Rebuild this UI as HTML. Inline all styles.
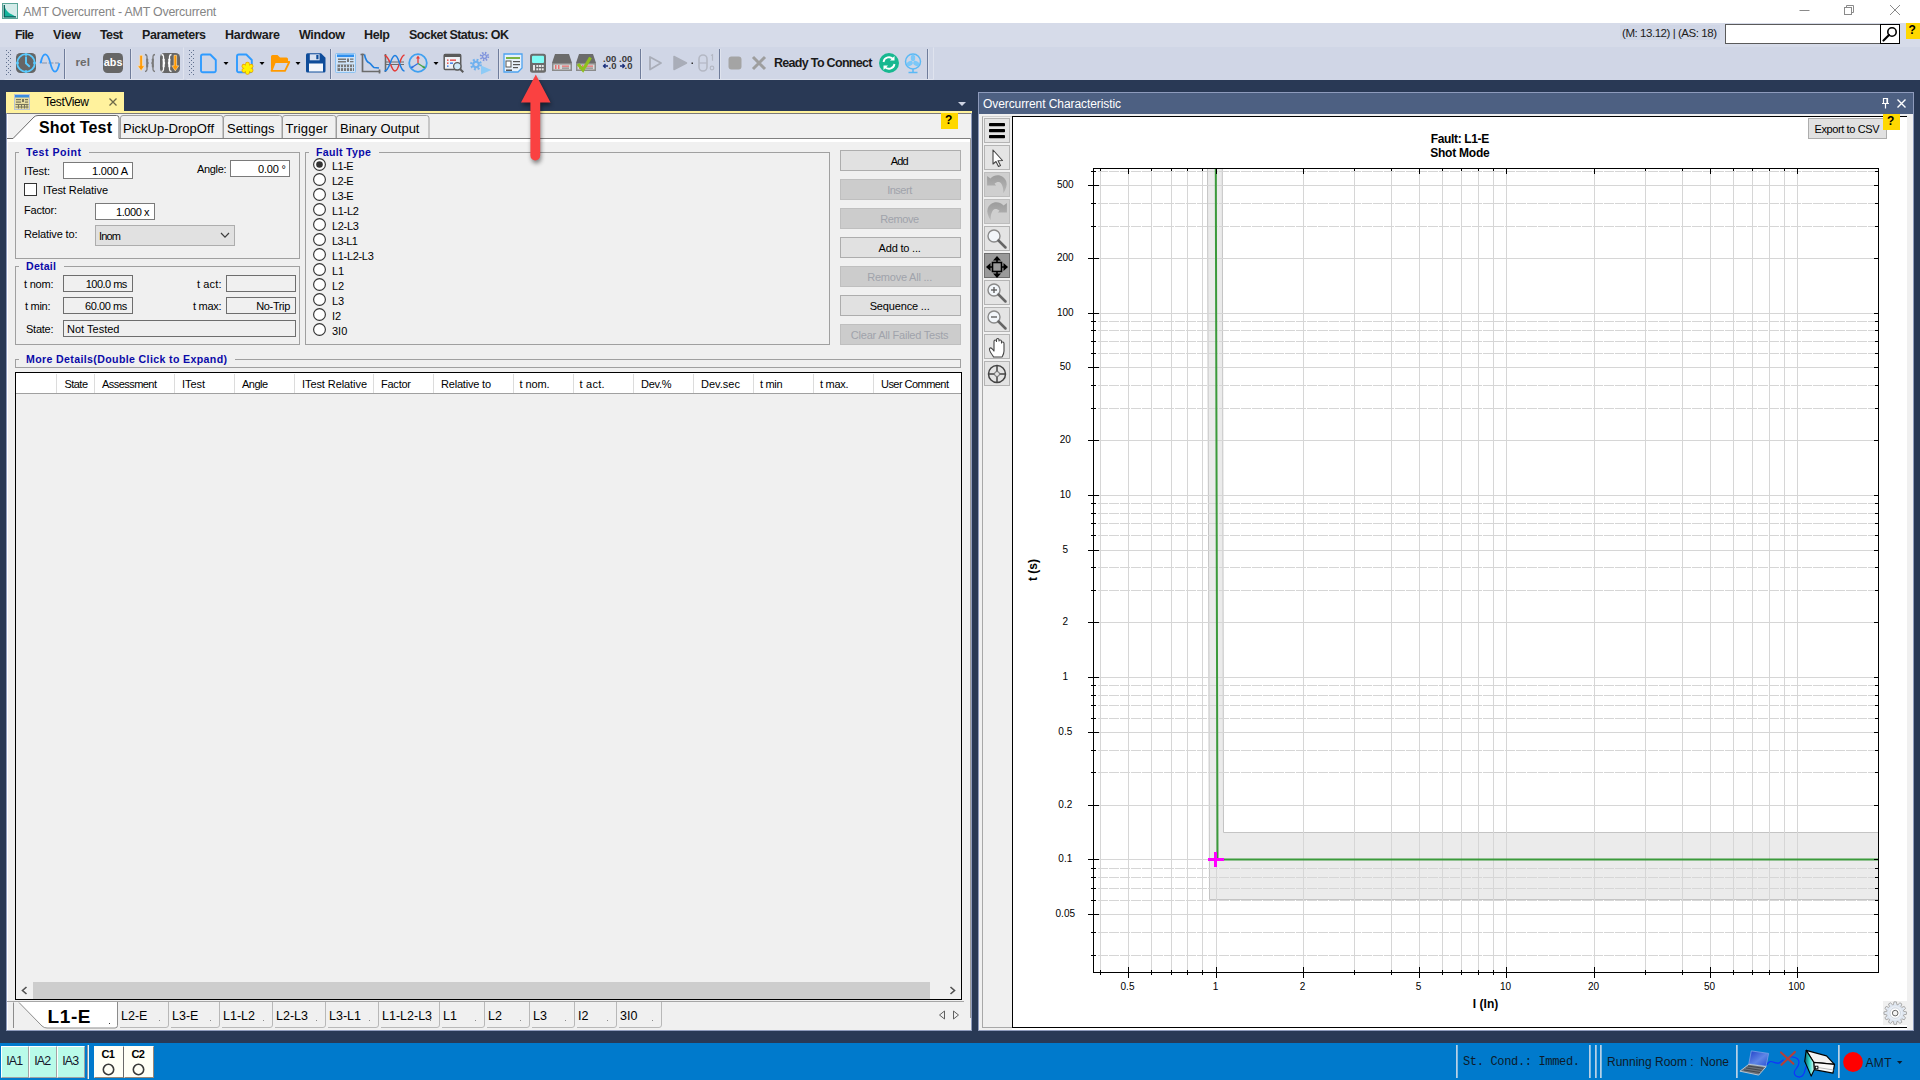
<!DOCTYPE html>
<html lang="en"><head><meta charset="utf-8"><title>AMT Overcurrent - AMT Overcurrent</title>
<style>
html,body{margin:0;padding:0;}
body{width:1920px;height:1080px;overflow:hidden;position:relative;background:#293955;font-family:"Liberation Sans", sans-serif;font-size:11px;color:#000;}
.t{position:absolute;white-space:pre;}
.b{position:absolute;box-sizing:border-box;}
svg{position:absolute;overflow:visible;}
</style></head>
<body>
<div class="b" style="left:0px;top:0px;width:1920px;height:23px;background:#fff;"></div>
<svg style="left:2px;top:3px" width="16" height="16" viewBox="0 0 16 16"><rect x=".5" y=".5" width="15" height="15" fill="#d3ebe9" stroke="#5aa698"/><path d="M2 2 C3.500 7 6 9.500 9 11 C11 12 12.500 13 14.300 14.200 L2 14.200 Z" fill="#15b49c"/><path d="M2.300 2 V13.800 H14" fill="none" stroke="#0a5f5a" stroke-width="1.300"/></svg>
<span class="t" id="t1" style="top:5.50px;font-size:12.4px;line-height:12.4px;color:#858585;letter-spacing:-0.216px;left:23.3px;">AMT Overcurrent - AMT Overcurrent</span>
<svg style="left:1790px;top:0" width="130" height="23" viewBox="0 0 130 23"><g fill="none" stroke="#8a8a8a" stroke-width="1"><path d="M9.5 10.5 H19.5"/><rect x="54.5" y="7.5" width="7" height="7"/><path d="M56.5 7.5 V5.5 H63.5 V12.5 H61.5"/><path d="M100 5 L110 15 M110 5 L100 15"/></g></svg>
<div class="b" style="left:0px;top:23px;width:1920px;height:24px;background:#d6dbe9;"></div>
<div class="b" style="left:0px;top:47px;width:1920px;height:33px;background:#d0d6e6;"></div>
<span class="t" id="t2" style="top:29.42px;font-size:12.5px;line-height:12.5px;font-weight:bold;color:#1b1b1b;letter-spacing:-0.848px;left:15px;">File</span>
<span class="t" id="t3" style="top:29.42px;font-size:12.5px;line-height:12.5px;font-weight:bold;color:#1b1b1b;letter-spacing:-0.090px;left:53px;">View</span>
<span class="t" id="t4" style="top:29.42px;font-size:12.5px;line-height:12.5px;font-weight:bold;color:#1b1b1b;letter-spacing:-0.594px;left:100px;">Test</span>
<span class="t" id="t5" style="top:29.42px;font-size:12.5px;line-height:12.5px;font-weight:bold;color:#1b1b1b;letter-spacing:-0.457px;left:142px;">Parameters</span>
<span class="t" id="t6" style="top:29.42px;font-size:12.5px;line-height:12.5px;font-weight:bold;color:#1b1b1b;letter-spacing:-0.283px;left:225px;">Hardware</span>
<span class="t" id="t7" style="top:29.42px;font-size:12.5px;line-height:12.5px;font-weight:bold;color:#1b1b1b;letter-spacing:-0.359px;left:299px;">Window</span>
<span class="t" id="t8" style="top:29.42px;font-size:12.5px;line-height:12.5px;font-weight:bold;color:#1b1b1b;letter-spacing:-0.364px;left:364px;">Help</span>
<span class="t" id="t9" style="top:29.42px;font-size:12.5px;line-height:12.5px;font-weight:bold;color:#1b1b1b;letter-spacing:-0.566px;left:409px;">Socket Status: OK</span>
<div class="b" style="left:1620px;top:25px;width:100px;height:15px;background:#d0d6e6;z-index:-0;"></div>
<span class="t" id="t10" style="top:28.07px;font-size:11.5px;line-height:11.5px;color:#1b1b1b;letter-spacing:-0.449px;left:1622px;">(M: 13.12) | (AS: 18)</span>
<div class="b" style="left:1725px;top:24px;width:175px;height:20px;background:#fff;border:1px solid #5a5a5a;"></div>
<div class="b" style="left:1880px;top:24px;width:20px;height:20px;background:#fff;border:1px solid #000;"></div>
<svg style="left:1881px;top:25px" width="18" height="18" viewBox="0 0 18 18"><circle cx="11" cy="7" r="4.2" fill="none" stroke="#000" stroke-width="1.6"/><path d="M8 10 L2.5 15.5" stroke="#000" stroke-width="2.2" stroke-linecap="round"/></svg>
<div class="b" style="left:1906px;top:23px;width:14px;height:16px;background:#ffd800;"></div><span class="t" id="t11" style="top:23.64px;font-size:12px;line-height:12px;font-weight:bold;left:1912.2px;transform:translateX(-50%);">?</span>
<svg style="left:0;top:0" width="1920" height="80" viewBox="0 0 1920 80"><path d="M4.500 79.500 H183.500 V47.500 M186.500 79.500 H933.500 V47.500" fill="none" stroke="#dfe3ee" stroke-width="1"/><rect x="6" y="50" width="1" height="1" fill="#62718f"/><rect x="10" y="50" width="1" height="1" fill="#62718f"/><rect x="8" y="52" width="1" height="1" fill="#62718f"/><rect x="6" y="54" width="1" height="1" fill="#62718f"/><rect x="10" y="54" width="1" height="1" fill="#62718f"/><rect x="8" y="56" width="1" height="1" fill="#62718f"/><rect x="6" y="58" width="1" height="1" fill="#62718f"/><rect x="10" y="58" width="1" height="1" fill="#62718f"/><rect x="8" y="60" width="1" height="1" fill="#62718f"/><rect x="6" y="62" width="1" height="1" fill="#62718f"/><rect x="10" y="62" width="1" height="1" fill="#62718f"/><rect x="8" y="64" width="1" height="1" fill="#62718f"/><rect x="6" y="66" width="1" height="1" fill="#62718f"/><rect x="10" y="66" width="1" height="1" fill="#62718f"/><rect x="8" y="68" width="1" height="1" fill="#62718f"/><rect x="6" y="70" width="1" height="1" fill="#62718f"/><rect x="10" y="70" width="1" height="1" fill="#62718f"/><rect x="8" y="72" width="1" height="1" fill="#62718f"/><rect x="6" y="74" width="1" height="1" fill="#62718f"/><rect x="10" y="74" width="1" height="1" fill="#62718f"/><rect x="189" y="50" width="1" height="1" fill="#62718f"/><rect x="193" y="50" width="1" height="1" fill="#62718f"/><rect x="191" y="52" width="1" height="1" fill="#62718f"/><rect x="189" y="54" width="1" height="1" fill="#62718f"/><rect x="193" y="54" width="1" height="1" fill="#62718f"/><rect x="191" y="56" width="1" height="1" fill="#62718f"/><rect x="189" y="58" width="1" height="1" fill="#62718f"/><rect x="193" y="58" width="1" height="1" fill="#62718f"/><rect x="191" y="60" width="1" height="1" fill="#62718f"/><rect x="189" y="62" width="1" height="1" fill="#62718f"/><rect x="193" y="62" width="1" height="1" fill="#62718f"/><rect x="191" y="64" width="1" height="1" fill="#62718f"/><rect x="189" y="66" width="1" height="1" fill="#62718f"/><rect x="193" y="66" width="1" height="1" fill="#62718f"/><rect x="191" y="68" width="1" height="1" fill="#62718f"/><rect x="189" y="70" width="1" height="1" fill="#62718f"/><rect x="193" y="70" width="1" height="1" fill="#62718f"/><rect x="191" y="72" width="1" height="1" fill="#62718f"/><rect x="189" y="74" width="1" height="1" fill="#62718f"/><rect x="193" y="74" width="1" height="1" fill="#62718f"/><rect x="64" y="49" width="1" height="30" fill="#6f7c9a"/><rect x="65" y="49" width="1" height="30" fill="#dfe3ee"/><rect x="130" y="49" width="1" height="30" fill="#6f7c9a"/><rect x="131" y="49" width="1" height="30" fill="#dfe3ee"/><rect x="330" y="49" width="1" height="30" fill="#6f7c9a"/><rect x="331" y="49" width="1" height="30" fill="#dfe3ee"/><rect x="498" y="49" width="1" height="30" fill="#6f7c9a"/><rect x="499" y="49" width="1" height="30" fill="#dfe3ee"/><rect x="640" y="49" width="1" height="30" fill="#6f7c9a"/><rect x="641" y="49" width="1" height="30" fill="#dfe3ee"/><rect x="719" y="49" width="1" height="30" fill="#6f7c9a"/><rect x="720" y="49" width="1" height="30" fill="#dfe3ee"/><rect x="927" y="49" width="1" height="30" fill="#6f7c9a"/><rect x="928" y="49" width="1" height="30" fill="#dfe3ee"/><rect x="16" y="53" width="20" height="20" rx="4.500" fill="#666"/><circle cx="26" cy="63" r="8.800" fill="none" stroke="#5bcbff" stroke-width="1.800"/><path d="M26 56.500 V63.300 L29.800 66.800" fill="none" stroke="#5bcbff" stroke-width="1.900"/><path d="M26 53 v3 M26 70 v3 M16 63 h3 M33 63 h3" stroke="#5bcbff" stroke-width="1.400"/><path d="M42 63 H59" stroke="#8a93a8" stroke-width="1" stroke-dasharray="5 1.500"/><path d="M40.800 62.500 C43 51.500 47.500 51.500 50.300 63 S57 74.500 59.400 63.300" fill="none" stroke="#2f9bff" stroke-width="1.800"/><circle cx="40.800" cy="62.500" r="1.100" fill="#2f9bff"/><text x="75.500" y="65.500" font-family='"Liberation Sans", sans-serif' font-size="11" font-weight="bold" fill="#6b6b6b" textLength="14.500" lengthAdjust="spacingAndGlyphs">rel</text><rect x="103" y="53" width="20" height="20" rx="4.500" fill="#666"/><text x="103.800" y="65.500" font-family='"Liberation Sans", sans-serif' font-size="11" font-weight="bold" fill="#fff" textLength="18.600" lengthAdjust="spacingAndGlyphs">abs</text><path d="M139.8 55.300 h2.600 v10.500 h2.200 l-3.500 5 l-3.500 -5 h2.200 z" fill="#ff9800" stroke="#ffe9c4" stroke-width=".6"/><path d="M145 54.500 q2 .3 2 2 v4.500 q0 1.800 1.500 2 q-1.500 .2 -1.500 2 v4.500 q0 1.700 -2 2" fill="none" stroke="#7a7a7a" stroke-width="1.300"/><rect x="146.2" y="58.500" width="2" height="9" rx=".8" fill="#7a7a7a"/><path d="M155 54.500 q-2 .3 -2 2 v4.500 q0 1.800 -1.500 2 q1.500 .2 1.500 2 v4.500 q0 1.700 2 2" fill="none" stroke="#7a7a7a" stroke-width="1.300"/><rect x="151.8" y="58.500" width="2" height="9" rx=".8" fill="#7a7a7a"/><rect x="160" y="53" width="20" height="20" rx="4.500" fill="#666"/><path d="M161.5 54.500 q2 .3 2 2 v4.500 q0 1.800 1.500 2 q-1.500 .2 -1.500 2 v4.500 q0 1.700 -2 2" fill="none" stroke="#fff" stroke-width="1.300"/><rect x="162.7" y="58.500" width="2" height="9" rx=".8" fill="#fff"/><path d="M171.5 54.500 q-2 .3 -2 2 v4.500 q0 1.800 -1.500 2 q1.500 .2 1.500 2 v4.500 q0 1.700 2 2" fill="none" stroke="#fff" stroke-width="1.300"/><rect x="168.3" y="58.500" width="2" height="9" rx=".8" fill="#fff"/><path d="M174 55.300 h2.600 v10.500 h2.200 l-3.500 5 l-3.500 -5 h2.200 z" fill="#ff9800" stroke="#ffe9c4" stroke-width=".6"/><path d="M202.8 54.500 h7.500 l5.500 5.500 v10.500 a1.800 1.800 0 0 1 -1.800 1.800 h-11.200 a1.800 1.800 0 0 1 -1.800 -1.800 v-14.200 a1.800 1.800 0 0 1 1.800 -1.800 z" fill="none" stroke="#2f9bff" stroke-width="1.900" stroke-linejoin="round"/><path d="M223.5 62 h5 l-2.5 3 z" fill="#000"/><path d="M238.8 54.500 h7.500 l5.500 5.500 v10.500 a1.800 1.800 0 0 1 -1.800 1.800 h-11.200 a1.800 1.800 0 0 1 -1.800 -1.800 v-14.200 a1.800 1.800 0 0 1 1.800 -1.800 z" fill="none" stroke="#2f9bff" stroke-width="1.900" stroke-linejoin="round"/><g transform="translate(247.500 68.300)" stroke="#f0a800" stroke-width="4.600" stroke-linecap="round"><path d="M0 -4.200 V4.200"/><path d="M0 -4.200 V4.200" transform="rotate(60)"/><path d="M0 -4.200 V4.200" transform="rotate(120)"/></g><g transform="translate(247.500 68.300)" stroke="#fff200" stroke-width="3" stroke-linecap="round"><path d="M0 -4.200 V4.200"/><path d="M0 -4.200 V4.200" transform="rotate(60)"/><path d="M0 -4.200 V4.200" transform="rotate(120)"/></g><path d="M259.5 62 h5 l-2.5 3 z" fill="#000"/><path d="M271 56.500 a1.500 1.500 0 0 1 1.500 -1.500 h5 l2.500 2.500 h6.500 a1.500 1.500 0 0 1 1.500 1.500 v3 h-12.500 l-4.500 8 z" fill="#ff9a00"/><path d="M275 62 h14.300 l-4.300 8.800 h-13.500 z" fill="#d0d6e6" stroke="#ff9a00" stroke-width="1.800" stroke-linejoin="round"/><path d="M295.5 62 h5 l-2.5 3 z" fill="#000"/><path d="M307.500 53.300 h13.500 l4.500 4.500 v13.200 a1.500 1.500 0 0 1 -1.500 1.500 h-16.500 a1.500 1.500 0 0 1 -1.500 -1.500 v-16.200 a1.500 1.500 0 0 1 1.500 -1.500 z" fill="#0e4c9a"/><rect x="309.800" y="54.300" width="9.800" height="6" fill="#d9e2f2"/><rect x="316.300" y="55" width="2.200" height="4.200" fill="#0e4c9a"/><rect x="309" y="63.500" width="14" height="8" fill="#f4f7fc"/><rect x="335.500" y="53.500" width="20" height="19" rx="1" fill="#cfe4f9" stroke="#8cc2f2"/><rect x="337" y="54.500" width="17" height="2.500" fill="#2f8fee"/><g fill="#777"><rect x="338" y="58.500" width="8" height="1.500"/><rect x="347" y="58.500" width="2" height="3.500"/><rect x="350" y="58.500" width="3.500" height="1.300"/><rect x="338" y="61" width="8" height="1.500"/><rect x="350" y="61" width="3.500" height="1.300"/><rect x="337.500" y="64.500" width="16.500" height="6.500"/></g><g fill="#cfe4f9"><rect x="337.500" y="67.200" width="16.500" height=".900"/><rect x="340" y="64.500" width=".900" height="6.500"/><rect x="343" y="64.500" width=".900" height="6.500"/><rect x="346" y="64.500" width=".900" height="6.500"/><rect x="349" y="64.500" width=".900" height="6.500"/><rect x="352" y="64.500" width=".900" height="6.500"/></g><path d="M362.500 53.500 V71.500 H380.500 M360.500 54.500 h4 M379.500 69.500 v4" fill="none" stroke="#6b6b6b" stroke-width="1.700"/><path d="M364.500 54.500 C365.500 60 367 62 369.500 63 C371.500 64 372 66.500 374 67.500 L379 68" fill="none" stroke="#1f7fe0" stroke-width="1.600"/><path d="M385.500 54 V72" stroke="#6b6b6b" stroke-width="1.600"/><path d="M385 62 H404 M385 64.500 H404" stroke="#6b6b6b" stroke-width="1.100"/><path d="M384.500 55.500 C390 55.500 390.500 71 395 71 S 399.500 55.500 404.500 55" fill="none" stroke="#e53935" stroke-width="1.500"/><path d="M384.500 71 C390 71 390.500 55.500 395 55.500 S 399.500 71 404.500 71" fill="none" stroke="#1f7fe0" stroke-width="1.500"/><circle cx="418" cy="63" r="8.800" fill="none" stroke="#3fa0f0" stroke-width="1.800"/><path d="M418 63.500 V57.500" stroke="#e53935" stroke-width="1.300"/><path d="M416 58.500 L418 55.500 L420 58.500 Z" fill="#e53935"/><path d="M418 63.500 L412.500 67" stroke="#2f6fe0" stroke-width="1.300"/><path d="M410.300 68.300 l3.300 -.3 -1.500 -2.400 z" fill="#2f6fe0"/><path d="M418 63.500 L423.500 67" stroke="#43a047" stroke-width="1.300"/><path d="M425.700 68.300 l-3.300 -.3 1.500 -2.400 z" fill="#43a047"/><path d="M433.5 62 h5 l-2.5 3 z" fill="#000"/><rect x="444.200" y="54.500" width="16.500" height="15" rx="1" fill="#eef1f6" stroke="#5a5a5a" stroke-width="1.500"/><rect x="444" y="54" width="17" height="3" fill="#5a5a5a"/><g fill="#e53935"><rect x="447" y="59.500" width="1.500" height="1.300"/><rect x="450" y="59.500" width="6" height="1.300"/><rect x="447" y="62.500" width="1.500" height="1.300"/></g><g fill="#2f6fe0"><rect x="450" y="62.500" width="3" height="1.300"/><rect x="447" y="65.500" width="1.500" height="1.300"/></g><circle cx="457.300" cy="66.300" r="3.700" fill="#cfe8f8" stroke="#5a5a5a" stroke-width="1.300"/><path d="M460 69 L463.300 72.300" stroke="#5a5a5a" stroke-width="2"/><circle cx="476" cy="64.5" r="4.7" fill="none" stroke="#6fb0ee" stroke-width="2.400" stroke-dasharray="1.846 1.846"/><circle cx="476" cy="64.5" r="3.8" fill="#6fb0ee"/><circle cx="476" cy="64.5" r="1.7" fill="#d0d6e6"/><circle cx="484.5" cy="56.5" r="3.5" fill="none" stroke="#7f93dc" stroke-width="2.400" stroke-dasharray="1.374 1.374"/><circle cx="484.5" cy="56.5" r="2.6" fill="#7f93dc"/><circle cx="484.5" cy="56.5" r="1.2" fill="#d0d6e6"/><path d="M481 65.500 L491.500 70 L481 74.500 Z" fill="#8ecbf6"/><path d="M504 54 h18 v14 l-4 4 h-14 z" fill="#e8f1fb" stroke="#4da3f0" stroke-width="1.300"/><rect x="506" y="57" width="14" height="2" fill="#7cb342"/><rect x="506" y="61" width="5" height="6" fill="#fff" stroke="#555" stroke-width="1"/><g fill="#555"><rect x="513" y="61" width="7" height="1.200"/><rect x="513" y="64" width="7" height="1.200"/><rect x="513" y="67" width="5" height="1.200"/><rect x="506" y="69.500" width="6" height="1.500"/></g><rect x="530" y="53.700" width="16" height="19" rx="2.500" fill="#6b6b6b"/><rect x="532" y="55.700" width="12" height="7.300" rx="1" fill="#7ffcf5"/><g fill="#e6e6e6"><rect x="533" y="65" width="2" height="5.500"/><rect x="536.300" y="65" width="2" height="2"/><rect x="539" y="65" width="2" height="2"/><rect x="541.700" y="65" width="2" height="2"/><rect x="536.300" y="68.300" width="2" height="2"/><rect x="539" y="68.300" width="2" height="2"/><rect x="541.700" y="68.300" width="2" height="2"/></g><path d="M555 54 h14 l3 9 h-20 z" fill="#6b6b6b"/><rect x="552" y="63" width="20" height="8" fill="#8a8a8a"/><rect x="553.5" y="64.500" width="17" height="5" fill="#d9d9d9"/><g fill="#e57373"><rect x="555" y="65" width="1.500" height="4"/><rect x="558" y="65" width="1.500" height="4"/><rect x="562" y="65.500" width="7" height="1.300"/></g><rect x="562" y="67.600" width="7" height="1" fill="#777"/><path d="M579 54 h14 l3 9 h-20 z" fill="#6b6b6b"/><rect x="576" y="63" width="20" height="8" fill="#8a8a8a"/><rect x="577.5" y="64.500" width="17" height="5" fill="#d9d9d9"/><g fill="#e57373"><rect x="579" y="65" width="1.500" height="4"/><rect x="582" y="65" width="1.500" height="4"/><rect x="586" y="65.500" width="7" height="1.300"/></g><rect x="586" y="67.600" width="7" height="1" fill="#777"/><path d="M578 64 L583 70 L590.500 57.500" fill="none" stroke="#8fbf1f" stroke-width="3.200"/><text x="603" y="61.500" font-family='"Liberation Sans", sans-serif' font-size="9.500" font-weight="bold" fill="#3a3a3a">.00</text><text x="608.500" y="69" font-family='"Liberation Sans", sans-serif' font-size="9.500" font-weight="bold" fill="#3a3a3a">.0</text><text x="619" y="61.500" font-family='"Liberation Sans", sans-serif' font-size="9.500" font-weight="bold" fill="#3a3a3a">.00</text><text x="624.500" y="69" font-family='"Liberation Sans", sans-serif' font-size="9.500" font-weight="bold" fill="#3a3a3a">.0</text><path d="M608 66 h-4.500 m2 -2 l-2 2 2 2" fill="none" stroke="#1a2e7a" stroke-width="1.300"/><path d="M620 66 h4.500 m-2 -2 l2 2 -2 2" fill="none" stroke="#1a2e7a" stroke-width="1.300"/><path d="M650 57 L661 63 L650 69.500 Z" fill="none" stroke="#a9adb8" stroke-width="1.800" stroke-linejoin="round"/><path d="M674 56.500 L686.500 63 L674 69.500 Z" fill="#a9adb8" stroke="#a9adb8" stroke-width="1.500" stroke-linejoin="round"/><rect x="691.500" y="62.500" width="1.500" height="1.500" fill="#333"/><rect x="699" y="55" width="8" height="16" rx="4" fill="none" stroke="#b4b8c4" stroke-width="1.600"/><path d="M699 63 h8" stroke="#b4b8c4" stroke-width="1.200"/><path d="M711 55.500 l1.500 -.8 v6" fill="none" stroke="#b4b8c4" stroke-width="1.200"/><circle cx="712" cy="68" r="1.800" fill="none" stroke="#b4b8c4" stroke-width="1.200"/><rect x="728.500" y="56.500" width="13" height="13" rx="3" fill="#a4a4a4"/><path d="M753 57 L765 69 M765 57 L753 69" stroke="#9e9e9e" stroke-width="3"/><circle cx="889" cy="63" r="10" fill="#17b890"/><path d="M883.500 62 a5.600 5.600 0 0 1 10 -2.500 M894.500 64 a5.600 5.600 0 0 1 -10 2.500" fill="none" stroke="#fff" stroke-width="1.800"/><path d="M894.500 56 v4.500 h-4.500 z M883.500 70 v-4.500 h4.500 z" fill="#fff"/><circle cx="913" cy="61.500" r="7.500" fill="none" stroke="#5bb9f5" stroke-width="1.500"/><g fill="#7cc8f8"><ellipse cx="913" cy="58" rx="2.200" ry="3.200"/><ellipse cx="909.800" cy="63.500" rx="3.200" ry="2.200" transform="rotate(-30 909.800 63.500)"/><ellipse cx="916.200" cy="63.500" rx="3.200" ry="2.200" transform="rotate(30 916.200 63.500)"/></g><path d="M913 69 v3 M908.500 72.500 h9" stroke="#5bb9f5" stroke-width="1.600"/></svg>
<span class="t" id="t12" style="top:57.42px;font-size:12.5px;line-height:12.5px;font-weight:bold;color:#1b1b1b;letter-spacing:-0.688px;left:774px;">Ready To Connect</span>
<div class="b" style="left:6px;top:92px;width:118px;height:19px;background:#fff29d;"></div>
<svg style="left:14px;top:94px" width="16" height="16" viewBox="0 0 16 16"><rect x=".5" y=".5" width="15" height="15" fill="#e6dca0" stroke="#b9c4d6"/><rect x="1" y="1" width="14" height="2.500" fill="#3b8de0"/><g fill="#77745a"><rect x="2" y="5" width="5" height="1.200"/><rect x="8" y="5" width="2" height="3"/><rect x="11" y="5" width="3" height="1.200"/><rect x="2" y="7.500" width="5" height="1.200"/><rect x="11" y="7.500" width="3" height="1.200"/><rect x="1.500" y="10" width="13" height="1"/><rect x="1.500" y="12.500" width="13" height="1"/><rect x="4" y="10" width="1" height="4.500"/><rect x="7" y="10" width="1" height="4.500"/><rect x="10" y="10" width="1" height="4.500"/><rect x="12.500" y="10" width="1" height="4.500"/></g></svg>
<span class="t" id="t13" style="top:95.84px;font-size:12px;line-height:12px;letter-spacing:-0.401px;left:44px;">TestView</span>
<svg style="left:108px;top:97px" width="10" height="10" viewBox="0 0 10 10"><path d="M1.500 1.500 L8.500 8.500 M8.500 1.500 L1.500 8.500" stroke="#6d6948" stroke-width="1.300"/></svg>
<svg style="left:957px;top:101px" width="10" height="6" viewBox="0 0 10 6"><path d="M1 1 h8 l-4 4 z" fill="#ced4e3"/></svg>
<div class="b" style="left:6px;top:111px;width:966px;height:2px;background:#fff29d;"></div>
<div class="b" style="left:6px;top:113px;width:966px;height:918px;background:#f0f0f0;border:1px solid #8e9bbc;border-top:none;"></div>
<div class="b" style="left:7px;top:113px;width:964px;height:1px;background:#7a7a7a;"></div>
<div class="b" style="left:7px;top:114px;width:1px;height:916px;background:#fff;"></div>
<div class="b" style="left:941px;top:113px;width:17px;height:16px;background:#ffd800;"></div><span class="t" id="t14" style="top:113.64px;font-size:12px;line-height:12px;font-weight:bold;left:948.7px;transform:translateX(-50%);">?</span>
<div class="b" style="left:7px;top:138px;width:964px;height:1px;background:#7f7f7f;"></div>
<div class="b" style="left:7px;top:139px;width:964px;height:3px;background:#fff;"></div>
<div class="b" style="left:970px;top:138px;width:1px;height:880px;background:#9a9a9a;"></div>
<svg style="left:0;top:0" width="480" height="145" viewBox="0 0 480 145"><g fill="#f0f0f0" stroke="#9e9e9e" stroke-width="1"><path d="M120.500 138 V118 q0 -2.500 2.500 -2.500 H220.500 q2.500 0 2.500 2.500 V138"/><path d="M223.500 138 V118 q0 -2.500 2.500 -2.500 H279.500 q2.500 0 2.500 2.500 V138"/><path d="M282.500 138 V118 q0 -2.500 2.500 -2.500 H333.500 q2.500 0 2.500 2.500 V138"/><path d="M336.500 138 V118 q0 -2.500 2.500 -2.500 H426.500 q2.500 0 2.500 2.500 V138"/></g><path d="M7 138.500 H13 L34 117 q1.500 -1.500 4 -1.500 H116.500 q2.500 0 2.500 2.500 V142 H7 Z" fill="#fff"/><path d="M7 138.500 H13 L34 117 q1.500 -1.500 4 -1.500 H116.500 q2.500 0 2.500 2.500 V138.500" fill="none" stroke="#6c6c6c" stroke-width="1"/></svg>
<span class="t" id="t15" style="top:120.46px;font-size:16px;line-height:16px;font-weight:bold;letter-spacing:0.161px;left:39px;">Shot Test</span>
<span class="t" id="t16" style="top:122.00px;font-size:13px;line-height:13px;letter-spacing:0.016px;left:123px;">PickUp-DropOff</span>
<span class="t" id="t17" style="top:122.00px;font-size:13px;line-height:13px;letter-spacing:0.075px;left:227px;">Settings</span>
<span class="t" id="t18" style="top:122.00px;font-size:13px;line-height:13px;letter-spacing:0.216px;left:285.5px;">Trigger</span>
<span class="t" id="t19" style="top:122.00px;font-size:13px;line-height:13px;left:340px;">Binary Output</span>
<div class="b" style="left:15px;top:152px;width:285px;height:107px;border:1px solid #a0a0a0;"></div><div class="b" style="left:16px;top:153px;width:283px;height:105px;border:1px solid #fff;border-right:none;border-bottom:none;opacity:.0;"></div><div class="b" style="left:19px;top:151px;width:70px;height:3px;background:#f0f0f0;"></div><span class="t" id="t20" style="top:147.43px;font-size:10.6px;line-height:10.6px;font-weight:bold;color:#0a0aa8;letter-spacing:0.508px;left:26px;">Test Point</span>
<span class="t" id="t21" style="top:165.69px;font-size:11px;line-height:11px;letter-spacing:-0.059px;left:24px;">ITest:</span>
<div class="b" style="left:63px;top:162px;width:70px;height:17px;background:#fff;border:1px solid #7a7a7a;"></div><span class="t" id="t22" style="top:166.19px;font-size:11px;line-height:11px;letter-spacing:-0.221px;right:1792.22px;">1.000 A</span>
<span class="t" id="t23" style="top:163.69px;font-size:11px;line-height:11px;letter-spacing:-0.338px;left:197px;">Angle:</span>
<div class="b" style="left:230px;top:160px;width:60px;height:17px;background:#fff;border:1px solid #7a7a7a;"></div><span class="t" id="t24" style="top:164.19px;font-size:11px;line-height:11px;letter-spacing:-0.174px;right:1634.17px;">0.00 °</span>
<div class="b" style="left:24px;top:183px;width:13px;height:13px;background:#fff;border:1px solid #333;"></div>
<span class="t" id="t25" style="top:184.99px;font-size:11px;line-height:11px;letter-spacing:-0.079px;left:43px;">ITest Relative</span>
<span class="t" id="t26" style="top:204.69px;font-size:11px;line-height:11px;letter-spacing:-0.206px;left:24px;">Factor:</span>
<div class="b" style="left:95px;top:203px;width:60px;height:17px;background:#fff;border:1px solid #7a7a7a;"></div><span class="t" id="t27" style="top:207.19px;font-size:11px;line-height:11px;letter-spacing:-0.431px;right:1770.93px;">1.000 x</span>
<span class="t" id="t28" style="top:228.99px;font-size:11px;line-height:11px;letter-spacing:-0.139px;left:24px;">Relative to:</span>
<div class="b" style="left:95px;top:225px;width:140px;height:21px;background:#e1e1e1;border:1px solid #adadad;"></div>
<span class="t" id="t29" style="top:230.99px;font-size:11px;line-height:11px;letter-spacing:-0.821px;left:99px;">Inom</span>
<svg style="left:220px;top:232px" width="10" height="7" viewBox="0 0 10 7"><path d="M1 1 L5 5.200 L9 1" fill="none" stroke="#3c3c3c" stroke-width="1.200"/></svg>
<div class="b" style="left:15px;top:266px;width:285px;height:79px;border:1px solid #a0a0a0;"></div><div class="b" style="left:16px;top:267px;width:283px;height:77px;border:1px solid #fff;border-right:none;border-bottom:none;opacity:.0;"></div><div class="b" style="left:19px;top:265px;width:45px;height:3px;background:#f0f0f0;"></div><span class="t" id="t30" style="top:261.43px;font-size:10.6px;line-height:10.6px;font-weight:bold;color:#0a0aa8;letter-spacing:0.228px;left:26px;">Detail</span>
<span class="t" id="t31" style="top:278.99px;font-size:11px;line-height:11px;letter-spacing:-0.216px;left:24px;">t nom:</span>
<div class="b" style="left:63px;top:275px;width:70px;height:17px;background:#f0f0f0;border:1px solid #6e6e6e;"></div><span class="t" id="t32" style="top:279.19px;font-size:11px;line-height:11px;letter-spacing:-0.521px;right:1793.22px;">100.0 ms</span>
<span class="t" id="t33" style="top:278.99px;font-size:11px;line-height:11px;letter-spacing:0.131px;left:197px;">t act:</span>
<div class="b" style="left:226px;top:275px;width:70px;height:17px;background:#f0f0f0;border:1px solid #6e6e6e;"></div>
<span class="t" id="t34" style="top:300.99px;font-size:11px;line-height:11px;letter-spacing:-0.281px;left:25px;">t min:</span>
<div class="b" style="left:63px;top:297px;width:70px;height:17px;background:#f0f0f0;border:1px solid #6e6e6e;"></div><span class="t" id="t35" style="top:301.19px;font-size:11px;line-height:11px;letter-spacing:-0.436px;right:1793.14px;">60.00 ms</span>
<span class="t" id="t36" style="top:300.99px;font-size:11px;line-height:11px;letter-spacing:-0.293px;left:193px;">t max:</span>
<div class="b" style="left:226px;top:297px;width:70px;height:17px;background:#f0f0f0;border:1px solid #6e6e6e;"></div><span class="t" id="t37" style="top:301.19px;font-size:11px;line-height:11px;letter-spacing:-0.377px;right:1630.08px;">No-Trip</span>
<span class="t" id="t38" style="top:323.99px;font-size:11px;line-height:11px;letter-spacing:-0.249px;left:26px;">State:</span>
<div class="b" style="left:63px;top:320px;width:233px;height:17px;background:#f0f0f0;border:1px solid #6e6e6e;"></div><span class="t" id="t39" style="top:324.09px;font-size:11px;line-height:11px;letter-spacing:0.012px;left:67px;">Not Tested</span>
<div class="b" style="left:305px;top:152px;width:525px;height:193px;border:1px solid #a0a0a0;"></div><div class="b" style="left:306px;top:153px;width:523px;height:191px;border:1px solid #fff;border-right:none;border-bottom:none;opacity:.0;"></div><div class="b" style="left:309px;top:151px;width:70px;height:3px;background:#f0f0f0;"></div><span class="t" id="t40" style="top:147.43px;font-size:10.6px;line-height:10.6px;font-weight:bold;color:#0a0aa8;letter-spacing:0.312px;left:316px;">Fault Type</span>
<svg style="left:313px;top:158px" width="13" height="13" viewBox="0 0 13 13"><circle cx="6.500" cy="6.500" r="5.900" fill="#fff" stroke="#333" stroke-width="1.150"/><circle cx="6.500" cy="6.500" r="3.300" fill="#333"/></svg>
<span class="t" id="t41" style="top:160.89px;font-size:11px;line-height:11px;letter-spacing:-0.549px;left:332px;">L1-E</span>
<svg style="left:313px;top:173px" width="13" height="13" viewBox="0 0 13 13"><circle cx="6.500" cy="6.500" r="5.900" fill="#fff" stroke="#333" stroke-width="1.150"/></svg>
<span class="t" id="t42" style="top:175.89px;font-size:11px;line-height:11px;letter-spacing:-0.549px;left:332px;">L2-E</span>
<svg style="left:313px;top:188px" width="13" height="13" viewBox="0 0 13 13"><circle cx="6.500" cy="6.500" r="5.900" fill="#fff" stroke="#333" stroke-width="1.150"/></svg>
<span class="t" id="t43" style="top:190.89px;font-size:11px;line-height:11px;letter-spacing:-0.549px;left:332px;">L3-E</span>
<svg style="left:313px;top:203px" width="13" height="13" viewBox="0 0 13 13"><circle cx="6.500" cy="6.500" r="5.900" fill="#fff" stroke="#333" stroke-width="1.150"/></svg>
<span class="t" id="t44" style="top:205.89px;font-size:11px;line-height:11px;letter-spacing:-0.336px;left:332px;">L1-L2</span>
<svg style="left:313px;top:218px" width="13" height="13" viewBox="0 0 13 13"><circle cx="6.500" cy="6.500" r="5.900" fill="#fff" stroke="#333" stroke-width="1.150"/></svg>
<span class="t" id="t45" style="top:220.89px;font-size:11px;line-height:11px;letter-spacing:-0.336px;left:332px;">L2-L3</span>
<svg style="left:313px;top:233px" width="13" height="13" viewBox="0 0 13 13"><circle cx="6.500" cy="6.500" r="5.900" fill="#fff" stroke="#333" stroke-width="1.150"/></svg>
<span class="t" id="t46" style="top:235.89px;font-size:11px;line-height:11px;letter-spacing:-0.536px;left:332px;">L3-L1</span>
<svg style="left:313px;top:248px" width="13" height="13" viewBox="0 0 13 13"><circle cx="6.500" cy="6.500" r="5.900" fill="#fff" stroke="#333" stroke-width="1.150"/></svg>
<span class="t" id="t47" style="top:250.89px;font-size:11px;line-height:11px;letter-spacing:-0.321px;left:332px;">L1-L2-L3</span>
<svg style="left:313px;top:263px" width="13" height="13" viewBox="0 0 13 13"><circle cx="6.500" cy="6.500" r="5.900" fill="#fff" stroke="#333" stroke-width="1.150"/></svg>
<span class="t" id="t48" style="top:265.89px;font-size:11px;line-height:11px;left:332px;">L1</span>
<svg style="left:313px;top:278px" width="13" height="13" viewBox="0 0 13 13"><circle cx="6.500" cy="6.500" r="5.900" fill="#fff" stroke="#333" stroke-width="1.150"/></svg>
<span class="t" id="t49" style="top:280.89px;font-size:11px;line-height:11px;left:332px;">L2</span>
<svg style="left:313px;top:293px" width="13" height="13" viewBox="0 0 13 13"><circle cx="6.500" cy="6.500" r="5.900" fill="#fff" stroke="#333" stroke-width="1.150"/></svg>
<span class="t" id="t50" style="top:295.89px;font-size:11px;line-height:11px;left:332px;">L3</span>
<svg style="left:313px;top:308px" width="13" height="13" viewBox="0 0 13 13"><circle cx="6.500" cy="6.500" r="5.900" fill="#fff" stroke="#333" stroke-width="1.150"/></svg>
<span class="t" id="t51" style="top:310.89px;font-size:11px;line-height:11px;left:332px;">I2</span>
<svg style="left:313px;top:323px" width="13" height="13" viewBox="0 0 13 13"><circle cx="6.500" cy="6.500" r="5.900" fill="#fff" stroke="#333" stroke-width="1.150"/></svg>
<span class="t" id="t52" style="top:325.89px;font-size:11px;line-height:11px;letter-spacing:-0.003px;left:332px;">3I0</span>
<div class="b" style="left:840px;top:150px;width:121px;height:21px;background:#e1e1e1;border:1px solid #adadad;"></div>
<span class="t" id="t53" style="top:155.59px;font-size:11px;line-height:11px;letter-spacing:-0.791px;left:899.305px;transform:translateX(-50%);">Add</span>
<div class="b" style="left:840px;top:179px;width:121px;height:21px;background:#cccccc;border:1px solid #bfbfbf;"></div>
<span class="t" id="t54" style="top:184.59px;font-size:11px;line-height:11px;color:#a0a3ab;letter-spacing:-0.503px;left:899.449px;transform:translateX(-50%);">Insert</span>
<div class="b" style="left:840px;top:208px;width:121px;height:21px;background:#cccccc;border:1px solid #bfbfbf;"></div>
<span class="t" id="t55" style="top:213.59px;font-size:11px;line-height:11px;color:#a0a3ab;letter-spacing:-0.393px;left:899.504px;transform:translateX(-50%);">Remove</span>
<div class="b" style="left:840px;top:237px;width:121px;height:21px;background:#e1e1e1;border:1px solid #adadad;"></div>
<span class="t" id="t56" style="top:242.59px;font-size:11px;line-height:11px;letter-spacing:-0.203px;left:899.599px;transform:translateX(-50%);">Add to ...</span>
<div class="b" style="left:840px;top:266px;width:121px;height:21px;background:#cccccc;border:1px solid #bfbfbf;"></div>
<span class="t" id="t57" style="top:271.59px;font-size:11px;line-height:11px;color:#a0a3ab;letter-spacing:-0.220px;left:899.59px;transform:translateX(-50%);">Remove All ...</span>
<div class="b" style="left:840px;top:295px;width:121px;height:21px;background:#e1e1e1;border:1px solid #adadad;"></div>
<span class="t" id="t58" style="top:300.59px;font-size:11px;line-height:11px;letter-spacing:-0.161px;left:899.62px;transform:translateX(-50%);">Sequence ...</span>
<div class="b" style="left:840px;top:324px;width:121px;height:21px;background:#cccccc;border:1px solid #bfbfbf;"></div>
<span class="t" id="t59" style="top:329.59px;font-size:11px;line-height:11px;color:#a0a3ab;letter-spacing:-0.229px;left:899.586px;transform:translateX(-50%);">Clear All Failed Tests</span>
<div class="b" style="left:15px;top:359px;width:946px;height:9px;border:1px solid #a0a0a0;"></div><div class="b" style="left:16px;top:360px;width:944px;height:7px;border:1px solid #fff;border-right:none;border-bottom:none;opacity:.0;"></div><div class="b" style="left:19px;top:358px;width:216px;height:3px;background:#f0f0f0;"></div><span class="t" id="t60" style="top:354.43px;font-size:10.6px;line-height:10.6px;font-weight:bold;color:#0a0aa8;letter-spacing:0.361px;left:26px;">More Details(Double Click to Expand)</span>
<div class="b" style="left:15px;top:372px;width:947px;height:628px;background:#f0f0f0;border:1px solid #000;"></div>
<div class="b" style="left:16px;top:373px;width:945px;height:20px;background:#fff;"></div>
<div class="b" style="left:16px;top:393px;width:945px;height:1px;background:#a0a0a0;"></div>
<div class="b" style="left:56px;top:374px;width:1px;height:19px;background:#dcdcdc;"></div>
<div class="b" style="left:94px;top:374px;width:1px;height:19px;background:#dcdcdc;"></div>
<div class="b" style="left:174px;top:374px;width:1px;height:19px;background:#dcdcdc;"></div>
<div class="b" style="left:234px;top:374px;width:1px;height:19px;background:#dcdcdc;"></div>
<div class="b" style="left:294px;top:374px;width:1px;height:19px;background:#dcdcdc;"></div>
<div class="b" style="left:373px;top:374px;width:1px;height:19px;background:#dcdcdc;"></div>
<div class="b" style="left:433px;top:374px;width:1px;height:19px;background:#dcdcdc;"></div>
<div class="b" style="left:513px;top:374px;width:1px;height:19px;background:#dcdcdc;"></div>
<div class="b" style="left:573px;top:374px;width:1px;height:19px;background:#dcdcdc;"></div>
<div class="b" style="left:633px;top:374px;width:1px;height:19px;background:#dcdcdc;"></div>
<div class="b" style="left:693px;top:374px;width:1px;height:19px;background:#dcdcdc;"></div>
<div class="b" style="left:753px;top:374px;width:1px;height:19px;background:#dcdcdc;"></div>
<div class="b" style="left:813px;top:374px;width:1px;height:19px;background:#dcdcdc;"></div>
<div class="b" style="left:873px;top:374px;width:1px;height:19px;background:#dcdcdc;"></div>
<span class="t" id="t61" style="top:378.89px;font-size:11px;line-height:11px;letter-spacing:-0.547px;left:64.5px;">State</span>
<span class="t" id="t62" style="top:378.89px;font-size:11px;line-height:11px;letter-spacing:-0.547px;left:102px;">Assessment</span>
<span class="t" id="t63" style="top:378.89px;font-size:11px;line-height:11px;letter-spacing:-0.061px;left:182px;">ITest</span>
<span class="t" id="t64" style="top:378.89px;font-size:11px;line-height:11px;letter-spacing:-0.535px;left:242px;">Angle</span>
<span class="t" id="t65" style="top:378.89px;font-size:11px;line-height:11px;letter-spacing:-0.079px;left:302px;">ITest Relative</span>
<span class="t" id="t66" style="top:378.89px;font-size:11px;line-height:11px;letter-spacing:-0.236px;left:381px;">Factor</span>
<span class="t" id="t67" style="top:378.89px;font-size:11px;line-height:11px;letter-spacing:-0.197px;left:441px;">Relative to</span>
<span class="t" id="t68" style="top:378.89px;font-size:11px;line-height:11px;letter-spacing:-0.116px;left:519.5px;">t nom.</span>
<span class="t" id="t69" style="top:378.89px;font-size:11px;line-height:11px;letter-spacing:0.231px;left:579.5px;">t act.</span>
<span class="t" id="t70" style="top:378.89px;font-size:11px;line-height:11px;letter-spacing:-0.274px;left:641px;">Dev.%</span>
<span class="t" id="t71" style="top:378.89px;font-size:11px;line-height:11px;letter-spacing:0.013px;left:701px;">Dev.sec</span>
<span class="t" id="t72" style="top:378.89px;font-size:11px;line-height:11px;letter-spacing:-0.335px;left:760px;">t min</span>
<span class="t" id="t73" style="top:378.89px;font-size:11px;line-height:11px;letter-spacing:-0.291px;left:820px;">t max.</span>
<span class="t" id="t74" style="top:378.89px;font-size:11px;line-height:11px;letter-spacing:-0.543px;left:881px;">User Comment</span>
<div class="b" style="left:16px;top:982px;width:945px;height:17px;background:#f0f0f0;"></div>
<div class="b" style="left:33px;top:982px;width:897px;height:17px;background:#cdcdcd;"></div>
<svg style="left:16px;top:982px" width="946" height="17" viewBox="0 0 946 17"><path d="M10.500 5 L6.500 8.500 L10.500 12 M934.500 5 L938.500 8.500 L934.500 12" fill="none" stroke="#505050" stroke-width="1.600"/></svg>
<div class="b" style="left:7px;top:1001px;width:957px;height:1px;background:#a6a6a6;"></div>
<svg style="left:0;top:1000px" width="700" height="31" viewBox="0 0 700 31"><g fill="none" stroke="#b8b8b8" stroke-width="1"><path d="M168.5 2 V25 q0 2.500 -2.500 2.500 H120"/><path d="M219.5 2 V25 q0 2.500 -2.500 2.500 H171"/><path d="M272.5 2 V25 q0 2.500 -2.500 2.500 H222"/><path d="M325.5 2 V25 q0 2.500 -2.500 2.500 H275"/><path d="M378.5 2 V25 q0 2.500 -2.500 2.500 H328"/><path d="M439.5 2 V25 q0 2.500 -2.500 2.500 H381"/><path d="M484.5 2 V25 q0 2.500 -2.500 2.500 H442"/><path d="M529.5 2 V25 q0 2.500 -2.500 2.500 H487"/><path d="M574.5 2 V25 q0 2.500 -2.500 2.500 H532"/><path d="M616.5 2 V25 q0 2.500 -2.500 2.500 H577"/><path d="M661.5 2 V25 q0 2.500 -2.500 2.500 H619"/></g><path d="M13.500 2 H117 V25.500 q0 2.500 -2.500 2.500 H47 q-3 0 -5 -2 L19 2.500 Z" fill="#fff"/><path d="M13.500 28 V2.500 M117.500 2 V25.500 q0 2.500 -2.500 2.500 H47 q-3 0 -5 -2 L19 2.500" fill="none" stroke="#8c8c8c" stroke-width="1"/></svg>
<span class="t" id="t75" style="top:1007.22px;font-size:19px;line-height:19px;font-weight:bold;letter-spacing:0.609px;left:47.5px;">L1-E</span>
<div class="b" style="left:108.5px;top:1022.5px;width:1.5px;height:1.5px;background:#333;"></div>
<span class="t" id="t76" style="top:1010.22px;font-size:12.5px;line-height:12.5px;left:121px;">L2-E</span>
<div class="b" style="left:159px;top:1020px;width:1px;height:1px;background:#8a8a8a;"></div>
<span class="t" id="t77" style="top:1010.22px;font-size:12.5px;line-height:12.5px;left:172px;">L3-E</span>
<div class="b" style="left:210px;top:1020px;width:1px;height:1px;background:#8a8a8a;"></div>
<span class="t" id="t78" style="top:1010.22px;font-size:12.5px;line-height:12.5px;left:223px;">L1-L2</span>
<div class="b" style="left:263px;top:1020px;width:1px;height:1px;background:#8a8a8a;"></div>
<span class="t" id="t79" style="top:1010.22px;font-size:12.5px;line-height:12.5px;left:276px;">L2-L3</span>
<div class="b" style="left:316px;top:1020px;width:1px;height:1px;background:#8a8a8a;"></div>
<span class="t" id="t80" style="top:1010.22px;font-size:12.5px;line-height:12.5px;left:329px;">L3-L1</span>
<div class="b" style="left:369px;top:1020px;width:1px;height:1px;background:#8a8a8a;"></div>
<span class="t" id="t81" style="top:1010.22px;font-size:12.5px;line-height:12.5px;left:382px;">L1-L2-L3</span>
<div class="b" style="left:430px;top:1020px;width:1px;height:1px;background:#8a8a8a;"></div>
<span class="t" id="t82" style="top:1010.22px;font-size:12.5px;line-height:12.5px;left:443px;">L1</span>
<div class="b" style="left:475px;top:1020px;width:1px;height:1px;background:#8a8a8a;"></div>
<span class="t" id="t83" style="top:1010.22px;font-size:12.5px;line-height:12.5px;left:488px;">L2</span>
<div class="b" style="left:520px;top:1020px;width:1px;height:1px;background:#8a8a8a;"></div>
<span class="t" id="t84" style="top:1010.22px;font-size:12.5px;line-height:12.5px;left:533px;">L3</span>
<div class="b" style="left:565px;top:1020px;width:1px;height:1px;background:#8a8a8a;"></div>
<span class="t" id="t85" style="top:1010.22px;font-size:12.5px;line-height:12.5px;left:578px;">I2</span>
<div class="b" style="left:607px;top:1020px;width:1px;height:1px;background:#8a8a8a;"></div>
<span class="t" id="t86" style="top:1010.22px;font-size:12.5px;line-height:12.5px;left:620px;">3I0</span>
<div class="b" style="left:652px;top:1020px;width:1px;height:1px;background:#8a8a8a;"></div>
<svg style="left:936px;top:1009px" width="26" height="12" viewBox="0 0 26 12"><path d="M8.500 2 V10 L3.500 6 Z M17.500 2 V10 L22.500 6 Z" fill="none" stroke="#606060" stroke-width="1"/></svg>
<div class="b" style="left:978px;top:92px;width:936px;height:939px;background:#f0f0f0;border:1px solid #8e9bbc;"></div>
<div class="b" style="left:978px;top:92px;width:936px;height:22px;background:#4d6082;border:1px solid #8e9bbc;border-bottom:none;"></div>
<span class="t" id="t87" style="top:97.84px;font-size:12px;line-height:12px;color:#fff;letter-spacing:-0.082px;left:983px;">Overcurrent Characteristic</span>
<svg style="left:1878px;top:96px" width="32" height="16" viewBox="0 0 32 16"><g fill="none" stroke="#fff" stroke-width="1.2"><path d="M5.500 2.500 h4 v5 h-4 z M9 2.500 v5 M4 7.500 h7 M7.500 7.500 v5"/><path d="M19.500 3.500 l8 8 M27.500 3.500 l-8 8" stroke-width="1.400"/></g></svg>
<div class="b" style="left:1012px;top:116px;width:895px;height:912px;background:#fff;border:1px solid #000;border-right:none;"></div>
<div class="b" style="left:982px;top:116px;width:30px;height:912px;background:#f0f0f0;border:1px solid #a8a8a8;border-right:none;border-top-color:#d0d0d0;"></div>
<div class="b" style="left:984px;top:118px;width:26px;height:25px;background:#e4e4e4;border:1px solid #b4b4b4;"></div>
<div class="b" style="left:984px;top:145px;width:26px;height:25px;background:#e4e4e4;border:1px solid #b4b4b4;"></div>
<div class="b" style="left:984px;top:172px;width:26px;height:25px;background:#cfcfcf;border:1px solid #bdbdbd;"></div>
<div class="b" style="left:984px;top:199px;width:26px;height:25px;background:#cfcfcf;border:1px solid #bdbdbd;"></div>
<div class="b" style="left:984px;top:226px;width:26px;height:25px;background:#e4e4e4;border:1px solid #b4b4b4;"></div>
<div class="b" style="left:984px;top:253px;width:26px;height:25px;background:#9a9a9a;border:1px solid #6e6e6e;"></div>
<div class="b" style="left:984px;top:280px;width:26px;height:25px;background:#e4e4e4;border:1px solid #b4b4b4;"></div>
<div class="b" style="left:984px;top:307px;width:26px;height:25px;background:#e4e4e4;border:1px solid #b4b4b4;"></div>
<div class="b" style="left:984px;top:334px;width:26px;height:25px;background:#e4e4e4;border:1px solid #b4b4b4;"></div>
<div class="b" style="left:984px;top:361px;width:26px;height:25px;background:#e4e4e4;border:1px solid #b4b4b4;"></div>
<svg style="left:984px;top:118px" width="26" height="270" viewBox="0 0 26 270"><g fill="#000"><rect x="5" y="5" width="16" height="3.200" rx=".8"/><rect x="5" y="11" width="16" height="3.200" rx=".8"/><rect x="5" y="17" width="16" height="3.200" rx=".8"/></g><path d="M9 32 V46 L12 43.500 L14.500 48.500 L16.500 47.500 L14 42.800 L18.500 42.500 Z" fill="#fff" stroke="#444" stroke-width="1.100" stroke-linejoin="round"/><defs><linearGradient id="ug" x1="0" y1="0" x2="0" y2="1"><stop offset="0" stop-color="#9c9c9c"/><stop offset="1" stop-color="#b8b8b8"/></linearGradient></defs><path d="M3.100 3.900 L3.100 13.600 L12.200 13.600 L10.500 11.700 C13 9.500 16 9.500 17.500 12 C19 14.500 19.500 18 19.300 21.300 C22 17 23.500 13 22.300 9.500 C20.500 3.500 12 .500 6.400 6.500 Z" fill="url(#ug)" transform="translate(0 54)"/><path d="M3.100 3.900 L3.100 13.600 L12.200 13.600 L10.500 11.700 C13 9.500 16 9.500 17.500 12 C19 14.500 19.500 18 19.300 21.300 C22 17 23.500 13 22.300 9.500 C20.500 3.500 12 .500 6.400 6.500 Z" fill="url(#ug)" transform="translate(26 81) scale(-1 1)"/><circle cx="10" cy="118" r="6" fill="#f2f6fa" stroke="#8a8a8a" stroke-width="1.400"/><path d="M14.500 122.5 L21.500 129.5" stroke="#666" stroke-width="2.500" stroke-linecap="round"/><g fill="#000"><path d="M13 138 l4 4.500 h-8 z M13 160 l4 -4.500 h-8 z M2 149 l4.500 -4 v8 z M24 149 l-4.500 -4 v8 z"/></g><rect x="8.500" y="144.500" width="9" height="9" fill="none" stroke="#000" stroke-width="1.600"/><path d="M13 142 v2.500 M13 153.500 v2.500 M6 149 h2.500 M17.500 149 h2.500" stroke="#000" stroke-width="1.600"/><circle cx="10" cy="172" r="6" fill="#f2f6fa" stroke="#8a8a8a" stroke-width="1.400"/><path d="M14.500 176.5 L21.500 183.5" stroke="#666" stroke-width="2.500" stroke-linecap="round"/><path d="M7 172 h6" stroke="#555" stroke-width="1.300"/><path d="M10 169 v6" stroke="#555" stroke-width="1.300"/><circle cx="10" cy="199" r="6" fill="#f2f6fa" stroke="#8a8a8a" stroke-width="1.400"/><path d="M14.500 203.5 L21.500 210.5" stroke="#666" stroke-width="2.500" stroke-linecap="round"/><path d="M7 199 h6" stroke="#555" stroke-width="1.300"/><path d="M9 238 C6 234 4.500 231 6 230 C7.500 229 9 232 10 233 V223.500 C10 221.500 12.500 221.500 12.500 223.500 V222 C12.500 220 15 220 15 222 V223 C15 221.500 17.500 221.500 17.500 223.500 V225 C17.500 223.500 20 223.500 20 225.500 V233 C20 236 18.500 238 18 239 H9.500 Z" fill="#fff" stroke="#444" stroke-width="1.100" stroke-linejoin="round"/><circle cx="13" cy="256" r="8.500" fill="none" stroke="#444" stroke-width="1.500"/><circle cx="13" cy="256" r="2.500" fill="none" stroke="#666" stroke-width="1"/><path d="M13 247 v6 M13 259 v6 M4 256 h6 M16 256 h6" stroke="#444" stroke-width="1.500"/></svg>
<svg style="left:0;top:0" width="1920" height="1080" viewBox="0 0 1920 1080" shape-rendering="crispEdges"><path d="M1207.500 168.5 L1209.5 899.5 H1878.5 V832.5 H1223.5 L1222.300 168.5 Z" fill="#ebebeb" stroke="#c4c4c4" stroke-width="1" shape-rendering="auto"/><rect x="1100" y="168.5" width="1" height="804" fill="#d6d6d6"/><rect x="1128" y="168.5" width="1" height="804" fill="#d6d6d6"/><rect x="1151" y="168.5" width="1" height="804" fill="#d6d6d6"/><rect x="1171" y="168.5" width="1" height="804" fill="#d6d6d6"/><rect x="1187" y="168.5" width="1" height="804" fill="#d6d6d6"/><rect x="1202" y="168.5" width="1" height="804" fill="#d6d6d6"/><rect x="1216" y="168.5" width="1" height="804" fill="#d6d6d6"/><rect x="1303" y="168.5" width="1" height="804" fill="#d6d6d6"/><rect x="1354" y="168.5" width="1" height="804" fill="#d6d6d6"/><rect x="1391" y="168.5" width="1" height="804" fill="#d6d6d6"/><rect x="1419" y="168.5" width="1" height="804" fill="#d6d6d6"/><rect x="1442" y="168.5" width="1" height="804" fill="#d6d6d6"/><rect x="1461" y="168.5" width="1" height="804" fill="#d6d6d6"/><rect x="1478" y="168.5" width="1" height="804" fill="#d6d6d6"/><rect x="1493" y="168.5" width="1" height="804" fill="#d6d6d6"/><rect x="1506" y="168.5" width="1" height="804" fill="#d6d6d6"/><rect x="1594" y="168.5" width="1" height="804" fill="#d6d6d6"/><rect x="1645" y="168.5" width="1" height="804" fill="#d6d6d6"/><rect x="1682" y="168.5" width="1" height="804" fill="#d6d6d6"/><rect x="1710" y="168.5" width="1" height="804" fill="#d6d6d6"/><rect x="1733" y="168.5" width="1" height="804" fill="#d6d6d6"/><rect x="1752" y="168.5" width="1" height="804" fill="#d6d6d6"/><rect x="1769" y="168.5" width="1" height="804" fill="#d6d6d6"/><rect x="1784" y="168.5" width="1" height="804" fill="#d6d6d6"/><rect x="1797" y="168.5" width="1" height="804" fill="#d6d6d6"/><path d="M1098 955.5 H1878.5" stroke="#d6d6d6" stroke-width="1" stroke-dasharray="10 1"/><path d="M1098 932.5 H1878.5" stroke="#d6d6d6" stroke-width="1" stroke-dasharray="10 1"/><rect x="1093.5" y="914" width="785" height="1" fill="#d6d6d6"/><path d="M1098 900.5 H1878.5" stroke="#d6d6d6" stroke-width="1" stroke-dasharray="10 1"/><path d="M1098 888.5 H1878.5" stroke="#d6d6d6" stroke-width="1" stroke-dasharray="10 1"/><path d="M1098 877.5 H1878.5" stroke="#d6d6d6" stroke-width="1" stroke-dasharray="10 1"/><path d="M1098 868.5 H1878.5" stroke="#d6d6d6" stroke-width="1" stroke-dasharray="10 1"/><rect x="1093.5" y="859" width="785" height="1" fill="#d6d6d6"/><rect x="1093.5" y="805" width="785" height="1" fill="#d6d6d6"/><path d="M1098 772.5 H1878.5" stroke="#d6d6d6" stroke-width="1" stroke-dasharray="10 1"/><path d="M1098 750.5 H1878.5" stroke="#d6d6d6" stroke-width="1" stroke-dasharray="10 1"/><rect x="1093.5" y="732" width="785" height="1" fill="#d6d6d6"/><path d="M1098 718.5 H1878.5" stroke="#d6d6d6" stroke-width="1" stroke-dasharray="10 1"/><path d="M1098 705.5 H1878.5" stroke="#d6d6d6" stroke-width="1" stroke-dasharray="10 1"/><path d="M1098 695.5 H1878.5" stroke="#d6d6d6" stroke-width="1" stroke-dasharray="10 1"/><path d="M1098 685.5 H1878.5" stroke="#d6d6d6" stroke-width="1" stroke-dasharray="10 1"/><rect x="1093.5" y="677" width="785" height="1" fill="#d6d6d6"/><rect x="1093.5" y="622" width="785" height="1" fill="#d6d6d6"/><path d="M1098 590.5 H1878.5" stroke="#d6d6d6" stroke-width="1" stroke-dasharray="10 1"/><path d="M1098 567.5 H1878.5" stroke="#d6d6d6" stroke-width="1" stroke-dasharray="10 1"/><rect x="1093.5" y="550" width="785" height="1" fill="#d6d6d6"/><path d="M1098 535.5 H1878.5" stroke="#d6d6d6" stroke-width="1" stroke-dasharray="10 1"/><path d="M1098 523.5 H1878.5" stroke="#d6d6d6" stroke-width="1" stroke-dasharray="10 1"/><path d="M1098 513.5 H1878.5" stroke="#d6d6d6" stroke-width="1" stroke-dasharray="10 1"/><path d="M1098 503.5 H1878.5" stroke="#d6d6d6" stroke-width="1" stroke-dasharray="10 1"/><rect x="1093.5" y="495" width="785" height="1" fill="#d6d6d6"/><rect x="1093.5" y="440" width="785" height="1" fill="#d6d6d6"/><path d="M1098 408.5 H1878.5" stroke="#d6d6d6" stroke-width="1" stroke-dasharray="10 1"/><path d="M1098 385.5 H1878.5" stroke="#d6d6d6" stroke-width="1" stroke-dasharray="10 1"/><rect x="1093.5" y="367" width="785" height="1" fill="#d6d6d6"/><path d="M1098 353.5 H1878.5" stroke="#d6d6d6" stroke-width="1" stroke-dasharray="10 1"/><path d="M1098 341.5 H1878.5" stroke="#d6d6d6" stroke-width="1" stroke-dasharray="10 1"/><path d="M1098 330.5 H1878.5" stroke="#d6d6d6" stroke-width="1" stroke-dasharray="10 1"/><path d="M1098 321.5 H1878.5" stroke="#d6d6d6" stroke-width="1" stroke-dasharray="10 1"/><rect x="1093.5" y="313" width="785" height="1" fill="#d6d6d6"/><rect x="1093.5" y="258" width="785" height="1" fill="#d6d6d6"/><path d="M1098 226.5 H1878.5" stroke="#d6d6d6" stroke-width="1" stroke-dasharray="10 1"/><path d="M1098 203.5 H1878.5" stroke="#d6d6d6" stroke-width="1" stroke-dasharray="10 1"/><rect x="1093.5" y="185" width="785" height="1" fill="#d6d6d6"/><path d="M1098 171.5 H1878.5" stroke="#d6d6d6" stroke-width="1" stroke-dasharray="10 1"/><path d="M1215.800 168.5 L1217.500 859.500 H1878.5" fill="none" stroke="#3b9a3b" stroke-width="2" shape-rendering="auto"/><rect x="1093.5" y="168.5" width="785" height="804" fill="none" stroke="#000" stroke-width="1"/><rect x="1093" y="168" width="2" height="805" fill="#000" fill-opacity=".0"/><rect x="1100" y="970" width="1" height="5" fill="#000"/><rect x="1100" y="168" width="1" height="3" fill="#000"/><rect x="1128" y="967" width="1" height="11" fill="#000"/><rect x="1128" y="168" width="1" height="6" fill="#000"/><rect x="1151" y="970" width="1" height="5" fill="#000"/><rect x="1151" y="168" width="1" height="3" fill="#000"/><rect x="1171" y="970" width="1" height="5" fill="#000"/><rect x="1171" y="168" width="1" height="3" fill="#000"/><rect x="1187" y="970" width="1" height="5" fill="#000"/><rect x="1187" y="168" width="1" height="3" fill="#000"/><rect x="1202" y="970" width="1" height="5" fill="#000"/><rect x="1202" y="168" width="1" height="3" fill="#000"/><rect x="1216" y="967" width="1" height="11" fill="#000"/><rect x="1216" y="168" width="1" height="6" fill="#000"/><rect x="1303" y="967" width="1" height="11" fill="#000"/><rect x="1303" y="168" width="1" height="6" fill="#000"/><rect x="1354" y="970" width="1" height="5" fill="#000"/><rect x="1354" y="168" width="1" height="3" fill="#000"/><rect x="1391" y="970" width="1" height="5" fill="#000"/><rect x="1391" y="168" width="1" height="3" fill="#000"/><rect x="1419" y="967" width="1" height="11" fill="#000"/><rect x="1419" y="168" width="1" height="6" fill="#000"/><rect x="1442" y="970" width="1" height="5" fill="#000"/><rect x="1442" y="168" width="1" height="3" fill="#000"/><rect x="1461" y="970" width="1" height="5" fill="#000"/><rect x="1461" y="168" width="1" height="3" fill="#000"/><rect x="1478" y="970" width="1" height="5" fill="#000"/><rect x="1478" y="168" width="1" height="3" fill="#000"/><rect x="1493" y="970" width="1" height="5" fill="#000"/><rect x="1493" y="168" width="1" height="3" fill="#000"/><rect x="1506" y="967" width="1" height="11" fill="#000"/><rect x="1506" y="168" width="1" height="6" fill="#000"/><rect x="1594" y="967" width="1" height="11" fill="#000"/><rect x="1594" y="168" width="1" height="6" fill="#000"/><rect x="1645" y="970" width="1" height="5" fill="#000"/><rect x="1645" y="168" width="1" height="3" fill="#000"/><rect x="1682" y="970" width="1" height="5" fill="#000"/><rect x="1682" y="168" width="1" height="3" fill="#000"/><rect x="1710" y="967" width="1" height="11" fill="#000"/><rect x="1710" y="168" width="1" height="6" fill="#000"/><rect x="1733" y="970" width="1" height="5" fill="#000"/><rect x="1733" y="168" width="1" height="3" fill="#000"/><rect x="1752" y="970" width="1" height="5" fill="#000"/><rect x="1752" y="168" width="1" height="3" fill="#000"/><rect x="1769" y="970" width="1" height="5" fill="#000"/><rect x="1769" y="168" width="1" height="3" fill="#000"/><rect x="1784" y="970" width="1" height="5" fill="#000"/><rect x="1784" y="168" width="1" height="3" fill="#000"/><rect x="1797" y="967" width="1" height="11" fill="#000"/><rect x="1797" y="168" width="1" height="6" fill="#000"/><rect x="1091" y="955" width="5" height="1" fill="#000"/><rect x="1875" y="955" width="3" height="1" fill="#000"/><rect x="1091" y="932" width="5" height="1" fill="#000"/><rect x="1875" y="932" width="3" height="1" fill="#000"/><rect x="1088" y="914" width="11" height="1" fill="#000"/><rect x="1874" y="914" width="5" height="1" fill="#000"/><rect x="1091" y="900" width="5" height="1" fill="#000"/><rect x="1875" y="900" width="3" height="1" fill="#000"/><rect x="1091" y="888" width="5" height="1" fill="#000"/><rect x="1875" y="888" width="3" height="1" fill="#000"/><rect x="1091" y="877" width="5" height="1" fill="#000"/><rect x="1875" y="877" width="3" height="1" fill="#000"/><rect x="1091" y="868" width="5" height="1" fill="#000"/><rect x="1875" y="868" width="3" height="1" fill="#000"/><rect x="1088" y="859" width="11" height="1" fill="#000"/><rect x="1874" y="859" width="5" height="1" fill="#000"/><rect x="1088" y="805" width="11" height="1" fill="#000"/><rect x="1874" y="805" width="5" height="1" fill="#000"/><rect x="1091" y="772" width="5" height="1" fill="#000"/><rect x="1875" y="772" width="3" height="1" fill="#000"/><rect x="1091" y="750" width="5" height="1" fill="#000"/><rect x="1875" y="750" width="3" height="1" fill="#000"/><rect x="1088" y="732" width="11" height="1" fill="#000"/><rect x="1874" y="732" width="5" height="1" fill="#000"/><rect x="1091" y="718" width="5" height="1" fill="#000"/><rect x="1875" y="718" width="3" height="1" fill="#000"/><rect x="1091" y="705" width="5" height="1" fill="#000"/><rect x="1875" y="705" width="3" height="1" fill="#000"/><rect x="1091" y="695" width="5" height="1" fill="#000"/><rect x="1875" y="695" width="3" height="1" fill="#000"/><rect x="1091" y="685" width="5" height="1" fill="#000"/><rect x="1875" y="685" width="3" height="1" fill="#000"/><rect x="1088" y="677" width="11" height="1" fill="#000"/><rect x="1874" y="677" width="5" height="1" fill="#000"/><rect x="1088" y="622" width="11" height="1" fill="#000"/><rect x="1874" y="622" width="5" height="1" fill="#000"/><rect x="1091" y="590" width="5" height="1" fill="#000"/><rect x="1875" y="590" width="3" height="1" fill="#000"/><rect x="1091" y="567" width="5" height="1" fill="#000"/><rect x="1875" y="567" width="3" height="1" fill="#000"/><rect x="1088" y="550" width="11" height="1" fill="#000"/><rect x="1874" y="550" width="5" height="1" fill="#000"/><rect x="1091" y="535" width="5" height="1" fill="#000"/><rect x="1875" y="535" width="3" height="1" fill="#000"/><rect x="1091" y="523" width="5" height="1" fill="#000"/><rect x="1875" y="523" width="3" height="1" fill="#000"/><rect x="1091" y="513" width="5" height="1" fill="#000"/><rect x="1875" y="513" width="3" height="1" fill="#000"/><rect x="1091" y="503" width="5" height="1" fill="#000"/><rect x="1875" y="503" width="3" height="1" fill="#000"/><rect x="1088" y="495" width="11" height="1" fill="#000"/><rect x="1874" y="495" width="5" height="1" fill="#000"/><rect x="1088" y="440" width="11" height="1" fill="#000"/><rect x="1874" y="440" width="5" height="1" fill="#000"/><rect x="1091" y="408" width="5" height="1" fill="#000"/><rect x="1875" y="408" width="3" height="1" fill="#000"/><rect x="1091" y="385" width="5" height="1" fill="#000"/><rect x="1875" y="385" width="3" height="1" fill="#000"/><rect x="1088" y="367" width="11" height="1" fill="#000"/><rect x="1874" y="367" width="5" height="1" fill="#000"/><rect x="1091" y="353" width="5" height="1" fill="#000"/><rect x="1875" y="353" width="3" height="1" fill="#000"/><rect x="1091" y="341" width="5" height="1" fill="#000"/><rect x="1875" y="341" width="3" height="1" fill="#000"/><rect x="1091" y="330" width="5" height="1" fill="#000"/><rect x="1875" y="330" width="3" height="1" fill="#000"/><rect x="1091" y="321" width="5" height="1" fill="#000"/><rect x="1875" y="321" width="3" height="1" fill="#000"/><rect x="1088" y="313" width="11" height="1" fill="#000"/><rect x="1874" y="313" width="5" height="1" fill="#000"/><rect x="1088" y="258" width="11" height="1" fill="#000"/><rect x="1874" y="258" width="5" height="1" fill="#000"/><rect x="1091" y="226" width="5" height="1" fill="#000"/><rect x="1875" y="226" width="3" height="1" fill="#000"/><rect x="1091" y="203" width="5" height="1" fill="#000"/><rect x="1875" y="203" width="3" height="1" fill="#000"/><rect x="1088" y="185" width="11" height="1" fill="#000"/><rect x="1874" y="185" width="5" height="1" fill="#000"/><rect x="1091" y="171" width="5" height="1" fill="#000"/><rect x="1875" y="171" width="3" height="1" fill="#000"/><rect x="1208" y="858" width="16" height="3" fill="#ff00ff"/><rect x="1214" y="852" width="3" height="15" fill="#ff00ff"/></svg>
<span class="t" id="t88" style="top:982.03px;font-size:10px;line-height:10px;left:1127.5px;transform:translateX(-50%);">0.5</span>
<span class="t" id="t89" style="top:982.03px;font-size:10px;line-height:10px;left:1215.5px;transform:translateX(-50%);">1</span>
<span class="t" id="t90" style="top:982.03px;font-size:10px;line-height:10px;left:1302.5px;transform:translateX(-50%);">2</span>
<span class="t" id="t91" style="top:982.03px;font-size:10px;line-height:10px;left:1418.5px;transform:translateX(-50%);">5</span>
<span class="t" id="t92" style="top:982.03px;font-size:10px;line-height:10px;left:1505.5px;transform:translateX(-50%);">10</span>
<span class="t" id="t93" style="top:982.03px;font-size:10px;line-height:10px;left:1593.5px;transform:translateX(-50%);">20</span>
<span class="t" id="t94" style="top:982.03px;font-size:10px;line-height:10px;left:1709.5px;transform:translateX(-50%);">50</span>
<span class="t" id="t95" style="top:982.03px;font-size:10px;line-height:10px;left:1796.5px;transform:translateX(-50%);">100</span>
<span class="t" id="t96" style="top:908.63px;font-size:10px;line-height:10px;left:1065.3px;transform:translateX(-50%);">0.05</span>
<span class="t" id="t97" style="top:853.63px;font-size:10px;line-height:10px;left:1065.3px;transform:translateX(-50%);">0.1</span>
<span class="t" id="t98" style="top:799.63px;font-size:10px;line-height:10px;left:1065.3px;transform:translateX(-50%);">0.2</span>
<span class="t" id="t99" style="top:726.63px;font-size:10px;line-height:10px;left:1065.3px;transform:translateX(-50%);">0.5</span>
<span class="t" id="t100" style="top:671.63px;font-size:10px;line-height:10px;left:1065.3px;transform:translateX(-50%);">1</span>
<span class="t" id="t101" style="top:616.63px;font-size:10px;line-height:10px;left:1065.3px;transform:translateX(-50%);">2</span>
<span class="t" id="t102" style="top:544.63px;font-size:10px;line-height:10px;left:1065.3px;transform:translateX(-50%);">5</span>
<span class="t" id="t103" style="top:489.64px;font-size:10px;line-height:10px;left:1065.3px;transform:translateX(-50%);">10</span>
<span class="t" id="t104" style="top:434.64px;font-size:10px;line-height:10px;left:1065.3px;transform:translateX(-50%);">20</span>
<span class="t" id="t105" style="top:361.64px;font-size:10px;line-height:10px;left:1065.3px;transform:translateX(-50%);">50</span>
<span class="t" id="t106" style="top:307.64px;font-size:10px;line-height:10px;left:1065.3px;transform:translateX(-50%);">100</span>
<span class="t" id="t107" style="top:252.64px;font-size:10px;line-height:10px;left:1065.3px;transform:translateX(-50%);">200</span>
<span class="t" id="t108" style="top:179.63px;font-size:10px;line-height:10px;left:1065.3px;transform:translateX(-50%);">500</span>
<span class="t" id="t109" style="top:132.84px;font-size:12px;line-height:12px;font-weight:bold;letter-spacing:-0.351px;left:1459.82px;transform:translateX(-50%);">Fault: L1-E</span>
<span class="t" id="t110" style="top:146.84px;font-size:12px;line-height:12px;font-weight:bold;letter-spacing:-0.228px;left:1459.89px;transform:translateX(-50%);">Shot Mode</span>
<span class="t" id="t111" style="top:998.34px;font-size:12px;line-height:12px;font-weight:bold;letter-spacing:0.033px;left:1485.52px;transform:translateX(-50%);">I (In)</span>
<span class="t" style="left:1033px;top:570px;font-size:12px;line-height:12px;font-weight:bold;transform:translate(-50%,-50%) rotate(-90deg);">t (s)</span>
<div class="b" style="left:1808px;top:118px;width:79px;height:21px;background:#e1e1e1;border:1px solid #adadad;"></div>
<span class="t" id="t112" style="top:123.69px;font-size:11px;line-height:11px;letter-spacing:-0.392px;left:1814.5px;">Export to CSV</span>
<div class="b" style="left:1883px;top:114px;width:17px;height:16px;background:#ffd800;"></div><span class="t" id="t113" style="top:114.64px;font-size:12px;line-height:12px;font-weight:bold;left:1890.7px;transform:translateX(-50%);">?</span>
<div class="b" style="left:1012px;top:1028px;width:895px;height:2px;background:#fff;"></div>
<div class="b" style="left:1883px;top:1001px;width:24px;height:24px;background:#f0f0f0;"></div>
<svg style="left:1883px;top:1001px" width="24" height="24" viewBox="0 0 24 24"><defs><radialGradient id="gg" cx=".5" cy=".5" r=".5"><stop offset=".35" stop-color="#fff"/><stop offset=".7" stop-color="#dbe3ee"/><stop offset="1" stop-color="#eef2f7"/></radialGradient></defs><path d="M10.53 3.56 L10.96 0.87 L13.44 0.87 L13.87 3.56 L15.02 3.87 L16.74 1.75 L18.89 2.99 L17.92 5.54 L18.76 6.38 L21.31 5.41 L22.55 7.56 L20.43 9.28 L20.74 10.43 L23.43 10.86 L23.43 13.34 L20.74 13.77 L20.43 14.92 L22.55 16.64 L21.31 18.79 L18.76 17.82 L17.92 18.66 L18.89 21.21 L16.74 22.45 L15.02 20.33 L13.87 20.64 L13.44 23.33 L10.96 23.33 L10.53 20.64 L9.38 20.33 L7.66 22.45 L5.51 21.21 L6.48 18.66 L5.64 17.82 L3.09 18.79 L1.85 16.64 L3.97 14.92 L3.66 13.77 L0.97 13.34 L0.97 10.86 L3.66 10.43 L3.97 9.28 L1.85 7.56 L3.09 5.41 L5.64 6.38 L6.48 5.54 L5.51 2.99 L7.66 1.75 L9.38 3.87 Z" fill="url(#gg)" stroke="#a2a2a2" stroke-width=".9" stroke-linejoin="round"/><circle cx="12.200" cy="12.100" r="5.300" fill="none" stroke="#cfd6e0" stroke-width="1"/><circle cx="12.200" cy="12.100" r="2.800" fill="#f4f4f4" stroke="#666" stroke-width="1"/></svg>
<div class="b" style="left:0px;top:1043px;width:1920px;height:37px;background:#007acc;"></div>
<div class="b" style="left:1px;top:1046px;width:28px;height:32px;background:#b9fbe9;border:1px solid #fff;border-right-color:#a2a2a2;border-bottom-color:#a2a2a2;"></div>
<span class="t" id="t114" style="top:1055.30px;font-size:12.4px;line-height:12.4px;color:#16162a;letter-spacing:-0.904px;left:14.248px;transform:translateX(-50%);">IA1</span>
<div class="b" style="left:29px;top:1046px;width:28px;height:32px;background:#b9fbe9;border:1px solid #fff;border-right-color:#a2a2a2;border-bottom-color:#a2a2a2;"></div>
<span class="t" id="t115" style="top:1055.30px;font-size:12.4px;line-height:12.4px;color:#16162a;letter-spacing:-0.904px;left:42.248px;transform:translateX(-50%);">IA2</span>
<div class="b" style="left:57px;top:1046px;width:28px;height:32px;background:#b9fbe9;border:1px solid #fff;border-right-color:#a2a2a2;border-bottom-color:#a2a2a2;"></div>
<span class="t" id="t116" style="top:1055.30px;font-size:12.4px;line-height:12.4px;color:#16162a;letter-spacing:-0.904px;left:70.248px;transform:translateX(-50%);">IA3</span>
<div class="b" style="left:87px;top:1045px;width:1px;height:34px;background:#8d99a8;"></div>
<div class="b" style="left:88px;top:1045px;width:1px;height:34px;background:#f2f6fa;"></div>
<div class="b" style="left:94px;top:1046px;width:30px;height:32px;background:#fffff6;border:1px solid #fffff6;border-right-color:#6a6a6a;border-bottom-color:#9a8878;"></div>
<span class="t" id="t117" style="top:1048.69px;font-size:11px;line-height:11px;font-weight:bold;letter-spacing:-0.773px;left:107.814px;transform:translateX(-50%);">C1</span>
<svg style="left:102.4px;top:1063.400px" width="13" height="13" viewBox="0 0 13 13"><circle cx="6.500" cy="6.500" r="5.200" fill="none" stroke="#3a3a3a" stroke-width="1.600"/></svg>
<div class="b" style="left:124px;top:1046px;width:30px;height:32px;background:#fffff6;border:1px solid #fffff6;border-right-color:#9a8878;border-bottom-color:#9a8878;"></div>
<span class="t" id="t118" style="top:1048.69px;font-size:11px;line-height:11px;font-weight:bold;letter-spacing:-0.773px;left:137.813px;transform:translateX(-50%);">C2</span>
<svg style="left:132.4px;top:1063.400px" width="13" height="13" viewBox="0 0 13 13"><circle cx="6.500" cy="6.500" r="5.200" fill="none" stroke="#3a3a3a" stroke-width="1.600"/></svg>
<div class="b" style="left:1456px;top:1045px;width:1px;height:33px;background:#b9cfe4;"></div><div class="b" style="left:1457px;top:1045px;width:1px;height:33px;background:#d8e6f2;opacity:.6"></div>
<div class="b" style="left:1589px;top:1045px;width:1px;height:33px;background:#b9cfe4;"></div><div class="b" style="left:1590px;top:1045px;width:1px;height:33px;background:#d8e6f2;opacity:.6"></div>
<div class="b" style="left:1595px;top:1045px;width:1px;height:33px;background:#b9cfe4;"></div><div class="b" style="left:1596px;top:1045px;width:1px;height:33px;background:#d8e6f2;opacity:.6"></div>
<div class="b" style="left:1600px;top:1045px;width:1px;height:33px;background:#b9cfe4;"></div><div class="b" style="left:1601px;top:1045px;width:1px;height:33px;background:#d8e6f2;opacity:.6"></div>
<div class="b" style="left:1736px;top:1045px;width:1px;height:33px;background:#b9cfe4;"></div><div class="b" style="left:1737px;top:1045px;width:1px;height:33px;background:#d8e6f2;opacity:.6"></div>
<div class="b" style="left:1838px;top:1045px;width:1px;height:33px;background:#b9cfe4;"></div><div class="b" style="left:1839px;top:1045px;width:1px;height:33px;background:#d8e6f2;opacity:.6"></div>
<span class="t" id="t119" style="top:1055.84px;font-size:12px;line-height:12px;color:#0d1b2a;font-family:'Liberation Mono', monospace;letter-spacing:-0.340px;left:1463px;">St. Cond.: Immed.</span>
<span class="t" id="t120" style="top:1055.84px;font-size:12px;line-height:12px;color:#0d1b2a;letter-spacing:-0.004px;left:1607px;">Running Room :  None</span>
<svg style="left:1738px;top:1045px" width="100" height="35" viewBox="0 0 100 35"><defs><linearGradient id="lg1" x1="0" y1="0" x2="1" y2="1"><stop offset="0" stop-color="#1f3fc8"/><stop offset=".55" stop-color="#5f86e6"/><stop offset="1" stop-color="#2a4fd0"/></linearGradient><linearGradient id="lg2" x1="0" y1="0" x2="1" y2="0"><stop offset="0" stop-color="#0a5f6a"/><stop offset=".5" stop-color="#35d6c8"/><stop offset="1" stop-color="#e8fffb"/></linearGradient></defs><path d="M13.300 5.900 L30.600 8.400 L28.100 21.200 L10.800 18.800 Z" fill="url(#lg1)" stroke="#7f9fe6" stroke-width=".8"/><path d="M10.800 19.300 L28.100 21.700 L20.700 30.100 L1.900 26.200 Z" fill="#6b7078" stroke="#c4ccd6" stroke-width=".9"/><path d="M10 21 L25 23.200 M8 23 L23.500 25.400 M6 25 L22 27.500" stroke="#3e4248" stroke-width=".9"/><path d="M29.100 19.800 C30 17 32 15.800 35 17 S40 19 42 17.500 L45.500 14.800 M51.400 11.800 C56 12 59 12.500 60.300 14.800 C62 18 61 20.500 58 24 C55 27.500 56 31.500 61.300 32.100 C65 32 66.500 28 67.200 24.700 L70.200 15.800" fill="none" stroke="#1030ff" stroke-width="1.100"/><path d="M43 7.400 L55.400 18.800 M56.900 6.900 L43.500 19.800" stroke="#d4351f" stroke-width="2.100" stroke-linecap="round" stroke-opacity=".85"/><path d="M68.200 5.400 L88.500 10.800 L96.500 19.300 L75.700 17.300 Z" fill="#f2f2f2" stroke="#000" stroke-width="1.200" stroke-linejoin="round"/><path d="M75.700 17.300 L96.500 19.300 L95 28.200 L76.200 24.700 Z" fill="#fafafa" stroke="#000" stroke-width="1.200" stroke-linejoin="round"/><path d="M80 22.500 L95.500 25" stroke="#bdbdbd" stroke-width="1"/><path d="M68.200 5.400 L75.700 17.300 L76.200 24.700 L73.200 31.100 L66.700 16.300 Z" fill="url(#lg2)" stroke="#000" stroke-width="1.100" stroke-linejoin="round"/><rect x="77.300" y="21.200" width="2.600" height="2.600" fill="#fff" stroke="#000" stroke-width=".9"/></svg>
<svg style="left:1842.800px;top:1052px" width="20" height="20" viewBox="0 0 20 20"><circle cx="10" cy="10" r="9.900" fill="#f00"/></svg>
<span class="t" id="t121" style="top:1056.84px;font-size:12px;line-height:12px;color:#0d1b2a;letter-spacing:0.329px;left:1865.5px;">AMT</span>
<svg style="left:1897px;top:1061px" width="6" height="4" viewBox="0 0 6 4"><path d="M0 0 h5.400 l-2.700 3 z" fill="#0d1b2a"/></svg>
<svg style="left:500px;top:60px;filter:drop-shadow(1px 3px 2px rgba(0,0,0,.45))" width="80" height="110" viewBox="500 60 80 110"><path d="M535.800 74.500 L550.500 102.500 H540.200 V155.500 a4.900 4.900 0 0 1 -9.800 0 V102.500 H521 Z" fill="#fa4141"/></svg>
</body></html>
